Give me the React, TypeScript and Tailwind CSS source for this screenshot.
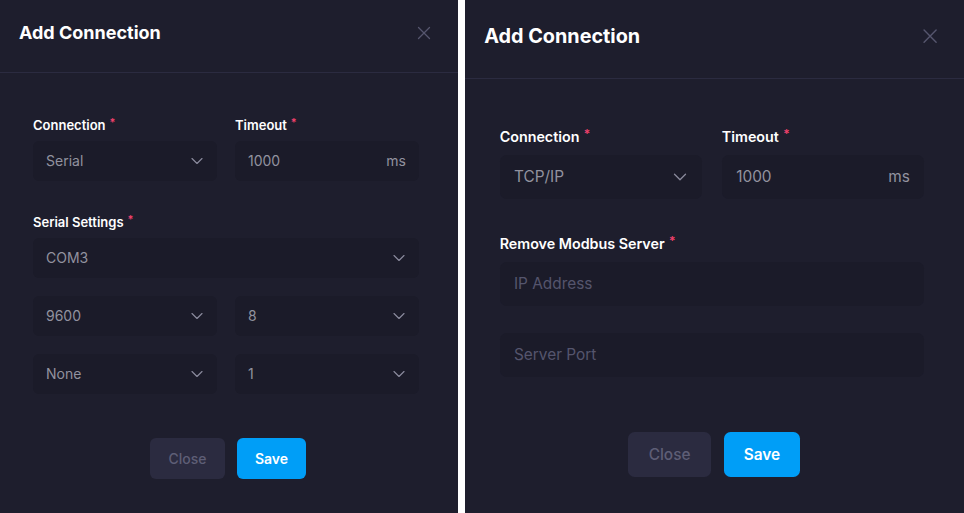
import React from "react";
import { X, ChevronDown } from "lucide-react";

const Label = ({ children }: { children: React.ReactNode }) => (
  <div className="mb-[6px] flex h-[20px] items-center text-[13px] font-semibold leading-[20px] text-white">
    {children}
    <span className="ml-[4px] -mt-[6px] text-[11px] text-[#f1416c]">*</span>
  </div>
);

const Select = ({ value }: { value: string }) => (
  <div className="flex h-[40px] items-center justify-between rounded-[6px] bg-[#1b1b29] pb-[1px] pl-[13px] pr-[10px] text-[14px] text-[#92929f]">
    <span>{value}</span>
    <ChevronDown size={20} strokeWidth={1.4} className="text-[#8a8a9c]" />
  </div>
);

const Input = ({ value, suffix, placeholder }: { value?: string; suffix?: string; placeholder?: string }) => (
  <div className="flex h-[40px] items-center justify-between rounded-[6px] bg-[#1b1b29] pb-[1px] px-[13px] text-[14px]">
    {value ? <span className="text-[#92929f]">{value}</span> : <span className="text-[#55556d]">{placeholder}</span>}
    {suffix && <span className="text-[#92929f]">{suffix}</span>}
  </div>
);

const Footer = ({ top }: { top: string }) => (
  <div className={`flex justify-center gap-[12px] pl-[4px] ${top}`}>
    <button className="h-[41px] w-[75px] rounded-[6px] bg-[#2b2b40] text-[14px] font-medium text-[#5e5e76]">Close</button>
    <button className="h-[41px] w-[69px] rounded-[6px] bg-[#009ef7] text-[14px] font-semibold text-white">Save</button>
  </div>
);

const Header = ({ pad }: { pad: string }) => (
  <div className={`flex items-center justify-between border-b border-[#2b2b40] pl-[19px] pr-[23px] ${pad}`}>
    <h2 className="text-[18px] font-bold text-white">Add Connection</h2>
    <X size={22} strokeWidth={1.4} className="text-[#56566e]" />
  </div>
);

export default function App() {
  return (
    <div className="flex h-[513px] w-[964px] overflow-hidden bg-white">
      {/* serial */}
      <div className="h-full w-[458px] shrink-0 bg-[#1e1e2d]">
        <div className="flex w-[458px] flex-col font-['Inter',sans-serif]">
          <Header pad="h-[73px] pb-[7px]" />
          <div className="pl-[33px] pr-[39px] pt-[42px]">
            <div className="grid grid-cols-2 gap-x-[18px]">
              <div>
                <Label>Connection</Label>
                <Select value="Serial" />
              </div>
              <div>
                <Label>Timeout</Label>
                <Input value="1000" suffix="ms" />
              </div>
            </div>
            <div className="mt-[31px]">
              <Label>Serial Settings</Label>
              <Select value="COM3" />
              <div className="mt-[18px] grid grid-cols-2 gap-[18px]">
                <Select value="9600" />
                <Select value="8" />
                <Select value="None" />
                <Select value="1" />
              </div>
            </div>
            <Footer top="mt-[44px]" />
          </div>
        </div>
      </div>

      <div className="w-[7px] shrink-0 bg-white" />

      {/* tcp/ip */}
      <div className="h-full flex-1 overflow-hidden bg-[#1e1e2d]">
        <div className="ml-[-1.5px] flex w-[458px] flex-col font-['Inter',sans-serif] [zoom:1.1]">
          <Header pad="h-[72px] pb-[5px]" />
          <div className="pl-[33px] pr-[39px] pt-[43px]">
            <div className="grid grid-cols-2 gap-x-[18px]">
              <div>
                <Label>Connection</Label>
                <Select value="TCP/IP" />
              </div>
              <div>
                <Label>Timeout</Label>
                <Input value="1000" suffix="ms" />
              </div>
            </div>
            <div className="mt-[31px]">
              <Label>Remove Modbus Server</Label>
              <Input placeholder="IP Address" />
              <div className="mt-[25px]">
                <Input placeholder="Server Port" />
              </div>
            </div>
            <Footer top="mt-[50px]" />
          </div>
        </div>
      </div>
    </div>
  );
}
